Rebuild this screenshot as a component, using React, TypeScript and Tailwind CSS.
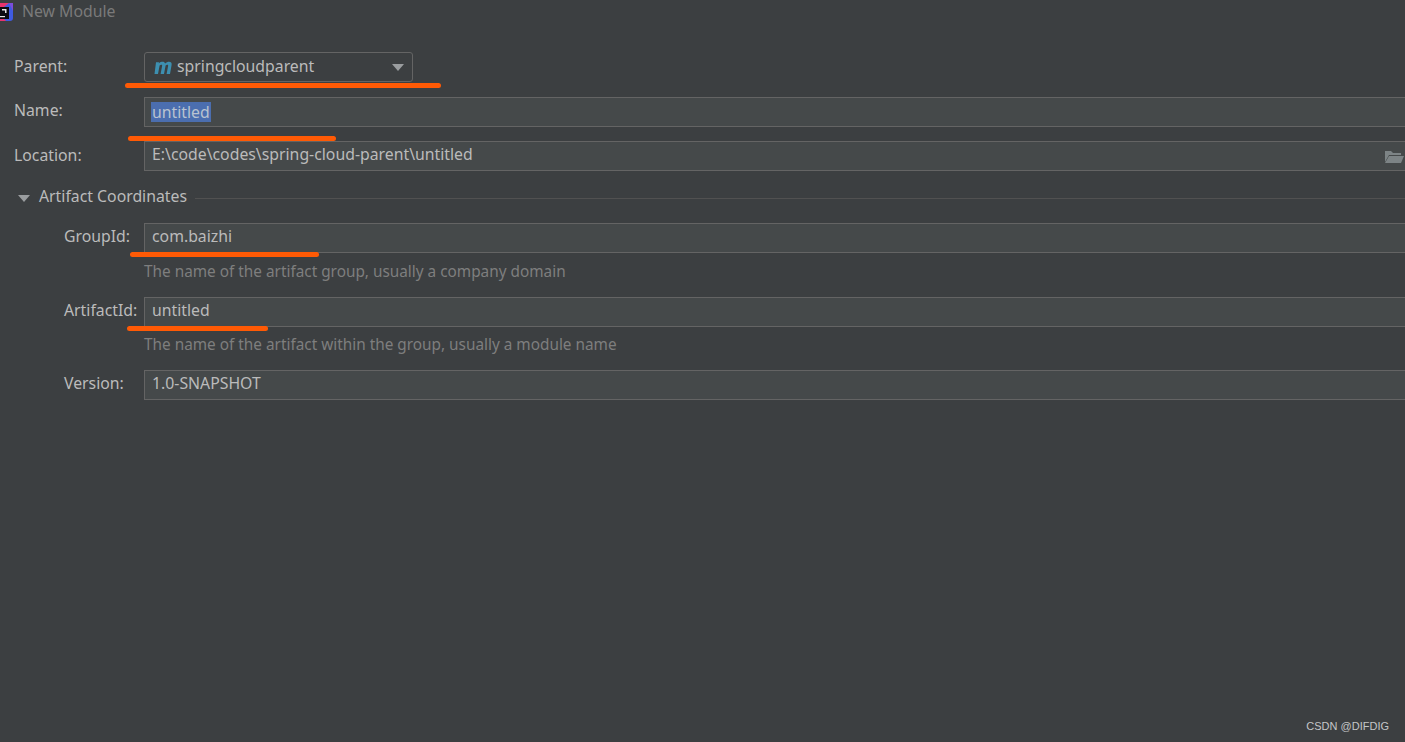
import React from "react";

const font = { fontFamily: '"Noto Sans", "Open Sans", sans-serif' };

function Field({ value, selected, children }: { value: string; selected?: boolean; children?: React.ReactNode }) {
  return (
    <div className="flex h-[30px] min-w-0 flex-1 -mr-1 items-center border border-[#646464] bg-[#45494a] pl-[7px] text-[15.8px] text-[#bbbbbb]">
      {selected ? <span className="bg-[#4b6eaf] leading-[20px] px-px -ml-px text-[#b9c3d0]">{value}</span> : <span className="-translate-y-px">{value}</span>}
      {children}
    </div>
  );
}

function Underline({ left, top, width }: { left: number; top: number; width: number }) {
  return <div className="absolute h-[5px] rounded-full bg-[#ff5a05]" style={{ left, top, width }} />;
}

export default function App() {
  return (
    <div style={font} className="relative h-[742px] w-[1405px] overflow-hidden bg-[#3c3f41] text-[15.8px] text-[#bbbbbb]">
      <div className="flex h-[24px] items-center">
        <svg width="14" height="21" viewBox="0 0 14 21" className="-mt-[1px] shrink-0">
          <rect x="-6" y="2" width="19" height="18" rx="3" fill="#3f5be0" />
          <path d="M-6 2h15L0 9z" fill="#e8336d" />
          <path d="M0 20h6L0 14z" fill="#e8336d" />
          <path d="M9 2h4v8z" fill="#7c4ddb" />
          <rect x="-3" y="6" width="12" height="12" fill="#0b0b0f" />
          <rect x="2" y="8" width="3" height="1.5" fill="#e5e5e5" />
          <rect x="5" y="8" width="1.5" height="4" fill="#e5e5e5" />
          <rect x="0" y="15" width="5" height="1.2" fill="#e5e5e5" />
        </svg>
        <span className="ml-2 text-[#7a7a7a]">New Module</span>
      </div>

      <div className="pl-[14px]">
        <div className="mt-[28px] flex items-center">
          <span className="w-[130px] shrink-0">Parent:</span>
          <div className="flex h-[30px] w-[269px] items-center rounded-[3px] border border-[#646464] bg-[#3c3f41] pl-2">
            <svg width="19" height="13" viewBox="0 0 19 13" className="shrink-0">
              <path d="M3 1.2h3l-.2 1.2C7 1.2 8.5.8 9.6.8c1.3 0 2.2.6 2.5 1.7C13.3 1.3 14.8.8 16 .8c1.9 0 3 1.2 2.6 3.2L17 13h-3.4l1.5-8c.2-.9-.1-1.3-.8-1.3-.6 0-1.2.3-1.7.8L11 13H7.6l1.5-8c.2-.9-.1-1.3-.8-1.3-.6 0-1.2.3-1.7.8L5 13H1.5z" fill="#3d8fb0" />
            </svg>
            <span className="ml-[5px] flex-1">springcloudparent</span>
            <svg width="12" height="7" viewBox="0 0 12 7" className="mr-[8px]">
              <path d="M0 0h12L6 7z" fill="#9a9d9f" />
            </svg>
          </div>
        </div>

        <div className="mt-[15px] flex items-center">
          <span className="w-[130px] shrink-0 -translate-y-px">Name:</span>
          <Field value="untitled" selected />
        </div>

        <div className="mt-[14px] flex items-center">
          <span className="w-[130px] shrink-0">Location:</span>
          <Field value={"E:\\code\\codes\\spring-cloud-parent\\untitled"}>
            <svg width="20" height="15" viewBox="0 0 20 15" className="ml-auto mr-[4px] shrink-0">
              <path d="M1 2h6l2 2h8v2H5L1 13z" fill="#7d8486" />
              <path d="M5 7h15l-3 7H1z" fill="#7d8486" />
            </svg>
          </Field>
        </div>

        <div className="mt-[16px] flex h-[22px] items-center">
          <svg width="12" height="7" viewBox="0 0 12 7" className="ml-[4px] shrink-0">
            <path d="M0 0h12L6 7z" fill="#9a9d9f" />
          </svg>
          <span className="ml-[9px] whitespace-nowrap -translate-y-px">Artifact Coordinates</span>
          <div className="ml-2 h-px flex-1 bg-[#515151]" />
        </div>

        <div className="mt-[14px] flex items-center pl-[50px]">
          <span className="w-[80px] shrink-0 -translate-y-px">GroupId:</span>
          <Field value="com.baizhi" />
        </div>
        <div className="mt-[8px] pl-[130px] text-[15.35px] text-[#7e7e7e] leading-[21px]">The name of the artifact group, usually a company domain</div>

        <div className="mt-[15px] flex items-center pl-[50px]">
          <span className="w-[80px] shrink-0 -translate-y-px">ArtifactId:</span>
          <Field value="untitled" />
        </div>
        <div className="mt-[7px] pl-[130px] text-[15.35px] text-[#7e7e7e] leading-[21px]">The name of the artifact within the group, usually a module name</div>

        <div className="mt-[15px] flex items-center pl-[50px]">
          <span className="w-[80px] shrink-0 -translate-y-px">Version:</span>
          <Field value="1.0-SNAPSHOT" />
        </div>
      </div>

      <Underline left={125} top={83} width={316} />
      <Underline left={128} top={136} width={208} />
      <Underline left={130} top={252} width={189} />
      <Underline left={127} top={326} width={141} />

      <div className="absolute right-[16px] bottom-[8px] text-[11px] text-[#c4c6c7]" style={{ fontFamily: '"Liberation Sans", sans-serif' }}>CSDN @DIFDIG</div>
    </div>
  );
}
